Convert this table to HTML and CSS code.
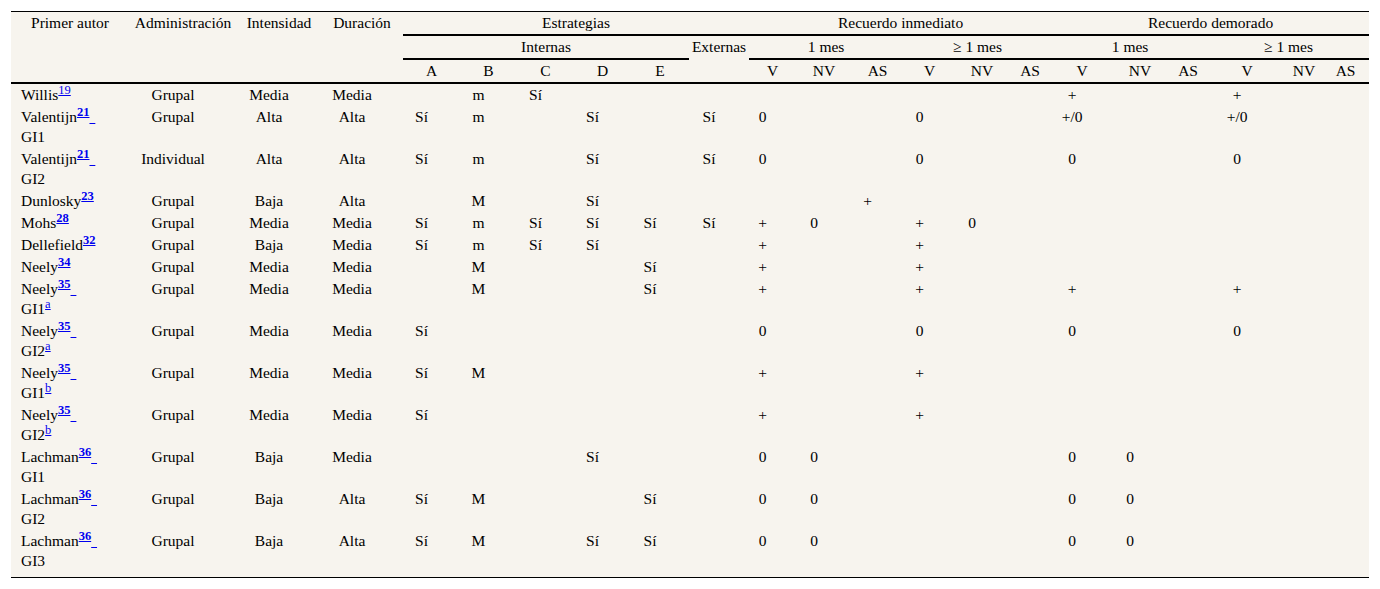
FILE: index.html
```html
<!DOCTYPE html>
<html lang="es">
<head>
<meta charset="utf-8">
<title>Tabla</title>
<link rel="stylesheet" href="styles.css">
</head>
<body>
<div class="wrap">
<table class="t">
<colgroup>
<col class="w118"><col class="w108"><col class="w84"><col class="w82">
<col class="w57"><col class="w57"><col class="w57"><col class="w57"><col class="w58">
<col class="w60">
<col class="w47"><col class="w56"><col class="w51">
<col class="w53"><col class="w52"><col class="w44">
<col class="w60"><col class="w56"><col class="w40">
<col class="w78"><col class="w36"><col class="w47">
</colgroup>
<thead>
<tr>
<th rowspan="3" class="rs">Primer autor</th>
<th rowspan="3" class="rs">Administración</th>
<th rowspan="3" class="rs">Intensidad</th>
<th rowspan="3" class="rs">Duración</th>
<th colspan="6" class="g">Estrategias</th>
<th colspan="6" class="g">Recuerdo inmediato</th>
<th colspan="6" class="g">Recuerdo demorado</th>
</tr>
<tr>
<th colspan="5" class="g">Internas</th>
<th>Externas</th>
<th colspan="3" class="g">1 mes</th>
<th colspan="3" class="g">≥ 1 mes</th>
<th colspan="3" class="g">1 mes</th>
<th colspan="3" class="g">≥ 1 mes</th>
</tr>
<tr class="last">
<th>A</th><th>B</th><th>C</th><th>D</th><th>E</th><th></th>
<th>V</th><th>NV</th><th>AS</th>
<th>V</th><th>NV</th><th>AS</th>
<th>V</th><th>NV</th><th>AS</th>
<th>V</th><th>NV</th><th>AS</th>
</tr>
</thead>
<tbody>
<tr>
<td class="au">Willis<sup><a href="#">19</a></sup></td>
<td>Grupal</td><td>Media</td><td>Media</td>
<td></td><td>m</td><td>Sí</td><td></td><td></td><td></td>
<td></td><td></td><td></td>
<td></td><td></td><td></td>
<td>+</td><td></td><td></td>
<td>+</td><td></td><td></td>
</tr>
<tr>
<td class="au">Valentijn<sup><a href="#" class="bd">21</a></sup><a href="#" class="sp">&nbsp;</a><br>GI1</td>
<td>Grupal</td><td>Alta</td><td>Alta</td>
<td>Sí</td><td>m</td><td></td><td>Sí</td><td></td><td>Sí</td>
<td>0</td><td></td><td></td>
<td>0</td><td></td><td></td>
<td>+/0</td><td></td><td></td>
<td>+/0</td><td></td><td></td>
</tr>
<tr>
<td class="au">Valentijn<sup><a href="#" class="bd">21</a></sup><a href="#" class="sp">&nbsp;</a><br>GI2</td>
<td>Individual</td><td>Alta</td><td>Alta</td>
<td>Sí</td><td>m</td><td></td><td>Sí</td><td></td><td>Sí</td>
<td>0</td><td></td><td></td>
<td>0</td><td></td><td></td>
<td>0</td><td></td><td></td>
<td>0</td><td></td><td></td>
</tr>
<tr>
<td class="au">Dunlosky<sup><a href="#" class="bd">23</a></sup></td>
<td>Grupal</td><td>Baja</td><td>Alta</td>
<td></td><td>M</td><td></td><td>Sí</td><td></td><td></td>
<td></td><td></td><td>+</td>
<td></td><td></td><td></td>
<td></td><td></td><td></td>
<td></td><td></td><td></td>
</tr>
<tr>
<td class="au">Mohs<sup><a href="#" class="bd">28</a></sup></td>
<td>Grupal</td><td>Media</td><td>Media</td>
<td>Sí</td><td>m</td><td>Sí</td><td>Sí</td><td>Sí</td><td>Sí</td>
<td>+</td><td>0</td><td></td>
<td>+</td><td>0</td><td></td>
<td></td><td></td><td></td>
<td></td><td></td><td></td>
</tr>
<tr>
<td class="au">Dellefield<sup><a href="#" class="bd">32</a></sup></td>
<td>Grupal</td><td>Baja</td><td>Media</td>
<td>Sí</td><td>m</td><td>Sí</td><td>Sí</td><td></td><td></td>
<td>+</td><td></td><td></td>
<td>+</td><td></td><td></td>
<td></td><td></td><td></td>
<td></td><td></td><td></td>
</tr>
<tr>
<td class="au">Neely<sup><a href="#" class="bd">34</a></sup></td>
<td>Grupal</td><td>Media</td><td>Media</td>
<td></td><td>M</td><td></td><td></td><td>Sí</td><td></td>
<td>+</td><td></td><td></td>
<td>+</td><td></td><td></td>
<td></td><td></td><td></td>
<td></td><td></td><td></td>
</tr>
<tr>
<td class="au">Neely<sup><a href="#" class="bd">35</a></sup><a href="#" class="sp">&nbsp;</a><br>GI1<sup><a href="#">a</a></sup></td>
<td>Grupal</td><td>Media</td><td>Media</td>
<td></td><td>M</td><td></td><td></td><td>Sí</td><td></td>
<td>+</td><td></td><td></td>
<td>+</td><td></td><td></td>
<td>+</td><td></td><td></td>
<td>+</td><td></td><td></td>
</tr>
<tr>
<td class="au">Neely<sup><a href="#" class="bd">35</a></sup><a href="#" class="sp">&nbsp;</a><br>GI2<sup><a href="#">a</a></sup></td>
<td>Grupal</td><td>Media</td><td>Media</td>
<td>Sí</td><td></td><td></td><td></td><td></td><td></td>
<td>0</td><td></td><td></td>
<td>0</td><td></td><td></td>
<td>0</td><td></td><td></td>
<td>0</td><td></td><td></td>
</tr>
<tr>
<td class="au">Neely<sup><a href="#" class="bd">35</a></sup><a href="#" class="sp">&nbsp;</a><br>GI1<sup><a href="#">b</a></sup></td>
<td>Grupal</td><td>Media</td><td>Media</td>
<td>Sí</td><td>M</td><td></td><td></td><td></td><td></td>
<td>+</td><td></td><td></td>
<td>+</td><td></td><td></td>
<td></td><td></td><td></td>
<td></td><td></td><td></td>
</tr>
<tr>
<td class="au">Neely<sup><a href="#" class="bd">35</a></sup><a href="#" class="sp">&nbsp;</a><br>GI2<sup><a href="#">b</a></sup></td>
<td>Grupal</td><td>Media</td><td>Media</td>
<td>Sí</td><td></td><td></td><td></td><td></td><td></td>
<td>+</td><td></td><td></td>
<td>+</td><td></td><td></td>
<td></td><td></td><td></td>
<td></td><td></td><td></td>
</tr>
<tr>
<td class="au">Lachman<sup><a href="#" class="bd">36</a></sup><a href="#" class="sp">&nbsp;</a><br>GI1</td>
<td>Grupal</td><td>Baja</td><td>Media</td>
<td></td><td></td><td></td><td>Sí</td><td></td><td></td>
<td>0</td><td>0</td><td></td>
<td></td><td></td><td></td>
<td>0</td><td>0</td><td></td>
<td></td><td></td><td></td>
</tr>
<tr>
<td class="au">Lachman<sup><a href="#" class="bd">36</a></sup><a href="#" class="sp">&nbsp;</a><br>GI2</td>
<td>Grupal</td><td>Baja</td><td>Alta</td>
<td>Sí</td><td>M</td><td></td><td></td><td>Sí</td><td></td>
<td>0</td><td>0</td><td></td>
<td></td><td></td><td></td>
<td>0</td><td>0</td><td></td>
<td></td><td></td><td></td>
</tr>
<tr>
<td class="au">Lachman<sup><a href="#" class="bd">36</a></sup><a href="#" class="sp">&nbsp;</a><br>GI3</td>
<td>Grupal</td><td>Baja</td><td>Alta</td>
<td>Sí</td><td>M</td><td></td><td>Sí</td><td>Sí</td><td></td>
<td>0</td><td>0</td><td></td>
<td></td><td></td><td></td>
<td>0</td><td>0</td><td></td>
<td></td><td></td><td></td>
</tr>
<tr class="end"><td colspan="22"></td></tr>
</tbody>
</table>
</div>
</body>
</html>
```

FILE: styles.css
```css
html, body {
  margin: 0;
  padding: 0;
  background: #ffffff;
}
body {
  font-family: "Liberation Serif", "Times New Roman", serif;
  font-size: 15.5px;
  color: #000;
}
.wrap {
  padding: 11px 11px 0 11px;
}
.t {
  width: 1358px;
  table-layout: fixed;
  border-collapse: separate;
  border-spacing: 0;
  background: #f7f4ee;
  border-top: 1px solid #000;
  border-bottom: 1px solid #000;
}
.w118 { width: 118px; }
.w108 { width: 108px; }
.w84 { width: 84px; }
.w82 { width: 82px; }
.w57 { width: 57px; }
.w58 { width: 58px; }
.w60 { width: 60px; }
.w47 { width: 47px; }
.w56 { width: 56px; }
.w51 { width: 51px; }
.w53 { width: 53px; }
.w52 { width: 52px; }
.w44 { width: 44px; }
.w40 { width: 40px; }
.w78 { width: 78px; }
.w36 { width: 36px; }

.t th,
.t td {
  font-weight: normal;
  line-height: 20px;
  vertical-align: top;
  white-space: nowrap;
  text-align: center;
  padding: 1px 0;
  overflow: visible;
}
.t th.g,
.t th.rs,
.t tr.last th {
  border-bottom: 2px solid #000;
}
.t td {
  padding: 1px 20px 1px 0;
}
.t td.au {
  text-align: left;
  padding-left: 10px;
  padding-right: 0;
}
.t tr.end td {
  height: 5px;
  padding: 0;
  line-height: 0;
}
sup {
  font-size: 12.5px;
  line-height: 0;
  vertical-align: super;
}
a {
  color: #0000ee;
  text-decoration: underline;
}
a.bd {
  font-weight: bold;
}
a.sp {
  word-spacing: 2px;
}
```
